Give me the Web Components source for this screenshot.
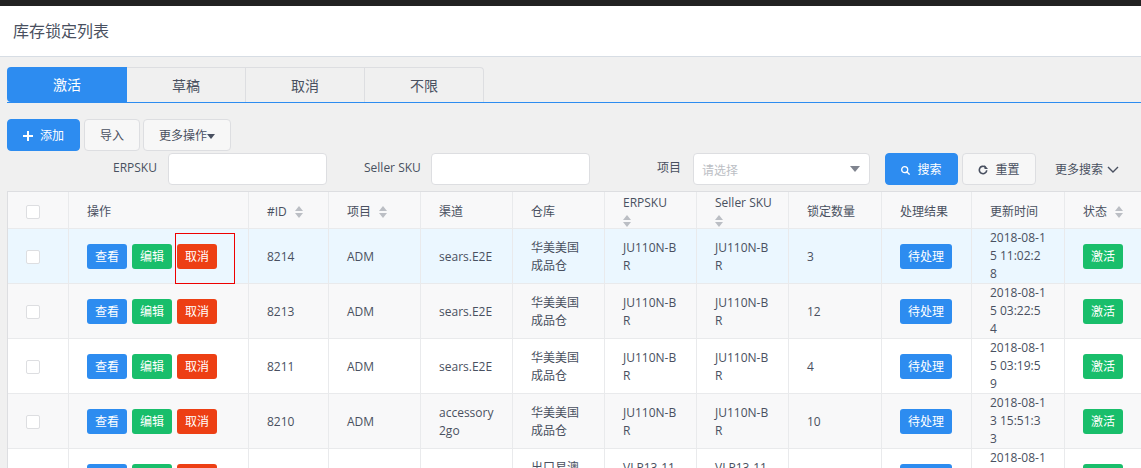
<!DOCTYPE html>
<html lang="zh"><head><meta charset="utf-8"><style>
html,body{margin:0;height:468px;overflow:hidden;background:#f0f0f0}
body{font:12px/18px "Open Sans","Noto Sans CJK SC",sans-serif;color:#495060}
</style></head><body>
<app-page></app-page>
<script>
const FONT='"Open Sans","Noto Sans CJK SC",sans-serif';
const C={blue:'#2d8cf0',green:'#19be6b',red:'#ed3f14'};
const sortIcon='<svg width="8" height="12" viewBox="0 0 8 12" style="flex:none"><path d="M4 0 8 5H0zM4 12 0 7h8z" fill="#bbbec4"/></svg>';

class AppHeader extends HTMLElement{constructor(){super();this.attachShadow({mode:'open'}).innerHTML=`<style>
:host{display:block;border-top:6px solid #222;background:#fff;border-bottom:1px solid #d7dde4;height:50px;box-sizing:content-box;padding-left:13px;font-size:16px;line-height:51px;color:#495060}
</style><slot></slot>`}}
customElements.define('app-header',AppHeader);

class TabBar extends HTMLElement{constructor(){super();this.attachShadow({mode:'open'}).innerHTML=`<style>
:host{display:flex;margin:10px 0 0 7px;height:36px;box-sizing:border-box;border-bottom:1px solid ${C.blue}}
</style><slot></slot>`}}
customElements.define('tab-bar',TabBar);

class TabItem extends HTMLElement{constructor(){super();this.attachShadow({mode:'open'}).innerHTML=`<style>
:host{display:block;width:119px;height:35px;box-sizing:border-box;border:1px solid #dddee1;border-left:0;border-bottom:0;text-align:center;font-size:14px;line-height:36px;color:#495060}
:host([first]){width:120px;border:0;background:${C.blue};color:#fff;border-radius:4px 0 0 4px}
:host([last]){border-radius:0 4px 0 0}
</style><slot></slot>`}}
customElements.define('tab-item',TabItem);

class UiButton extends HTMLElement{constructor(){super();this.attachShadow({mode:'open'}).innerHTML=`<style>
:host{display:inline-flex;align-items:center;justify-content:center;box-sizing:border-box;height:32px;padding-top:2px;border:1px solid #dddee1;border-radius:4px;background:#f7f7f7;color:#495060;font-size:12px;gap:7px;white-space:nowrap}
:host([primary]){background:${C.blue};border-color:${C.blue};color:#fff}
</style><slot name="icon"></slot><slot></slot>`}}
customElements.define('ui-button',UiButton);

class MiniTag extends HTMLElement{constructor(){super();this.attachShadow({mode:'open'}).innerHTML=`<style>
:host{display:inline-block;box-sizing:border-box;min-width:40px;height:25px;padding:0 8px;border-radius:3px;color:#fff;font-size:12px;line-height:25px;text-align:center;white-space:nowrap;background:${C.blue};vertical-align:middle}
:host([c=green]){background:${C.green}}
:host([c=red]){background:${C.red}}
</style><slot></slot>`}}
customElements.define('mini-tag',MiniTag);

class CheckBox extends HTMLElement{constructor(){super();this.attachShadow({mode:'open'}).innerHTML=`<style>
:host{display:block;width:12px;height:12px;border:1px solid #dddee1;border-radius:2px;background:#fff}
</style>`}}
customElements.define('check-box',CheckBox);

class TextInput extends HTMLElement{constructor(){super();this.attachShadow({mode:'open'}).innerHTML=`<style>
:host{display:flex;align-items:center;justify-content:space-between;box-sizing:border-box;height:32px;border:1px solid #dddee1;border-radius:4px;background:#fff;padding:0 9px 0 8px;color:#bbbec4;font-size:12px}
span{padding-top:3px}
svg{margin-top:-1px}
</style><span><slot></slot></span><slot name="caret"></slot>`}}
customElements.define('text-input',TextInput);

class SearchBar extends HTMLElement{constructor(){super();this.attachShadow({mode:'open'}).innerHTML=`<style>
:host{display:block;margin:16px 0 0 7px}
.acts{display:flex;gap:4px;height:32px}
.filter{display:flex;align-items:center;height:32px;margin-top:2px;padding-left:106px}
.filter>span{white-space:nowrap}
.lb{padding-bottom:2px}
</style>
<div class="acts">
<ui-button primary style="width:73px"><svg slot="icon" width="10" height="10" viewBox="0 0 10 10"><path d="M5 0v10M0 5h10" stroke="#fff" stroke-width="2"/></svg>添加</ui-button>
<ui-button style="width:56px">导入</ui-button>
<ui-button style="width:88px;gap:0;margin-left:-1px">更多操作<svg width="8" height="5" viewBox="0 0 8 5"><path d="M0 0h8L4 5z" fill="#495060"/></svg></ui-button>
</div>
<div class="filter">
<span class="lb" style="width:43px">ERPSKU</span>
<text-input style="width:159px;margin-left:12px"></text-input>
<span class="lb" style="width:55px;margin-left:37px">Seller SKU</span>
<text-input style="width:159px;margin-left:12px"></text-input>
<span class="lb" style="width:24px;margin-left:67px">项目</span>
<text-input style="width:177px;margin-left:12px">请选择<svg slot="caret" width="10" height="6" viewBox="0 0 10 6"><path d="M0 0h10L5 6z" fill="#80848f"/></svg></text-input>
<ui-button primary style="width:73px;margin-left:15px"><svg slot="icon" width="9" height="9" viewBox="0 0 9 9" fill="none" stroke="#fff" stroke-width="1.3"><circle cx="3.7" cy="3.7" r="3"/><path d="M6 6l2.6 2.6"/></svg>搜索</ui-button>
<ui-button style="width:74px;margin-left:4px"><svg slot="icon" width="10" height="10" viewBox="0 0 10 10" fill="none" stroke="#495060" stroke-width="1.6"><path d="M8.7 5.2A3.7 3.7 0 1 1 7.2 2"/><path d="M6.5 0v4h3.5z" stroke="none" fill="#495060"/></svg>重置</ui-button>
<span style="margin-left:19px;display:flex;align-items:center;gap:4px;padding-top:1px">更多搜索<svg width="12" height="7" viewBox="0 0 12 7" fill="none" stroke="#495060" stroke-width="1.4"><path d="M1 1l5 5 5-5"/></svg></span>
</div>`}}
customElements.define('search-bar',SearchBar);

const COLS=[61,180,80,92,92,92,92,92,93,90,93,80];
const ROWS=[
['8214','ADM','sears.E2E','华美美国<br>成品仓','JU110N-B<br>R','3','2018-08-1<br>5 11:02:2<br>8'],
['8213','ADM','sears.E2E','华美美国<br>成品仓','JU110N-B<br>R','12','2018-08-1<br>5 03:22:5<br>4'],
['8211','ADM','sears.E2E','华美美国<br>成品仓','JU110N-B<br>R','4','2018-08-1<br>5 03:19:5<br>9'],
['8210','ADM','accessory<br>2go','华美美国<br>成品仓','JU110N-B<br>R','10','2018-08-1<br>3 15:51:3<br>3'],
['8209','ADM','sears.E2E','出口易澳<br>洲仓','VLP13-11<br>5','2','2018-08-1<br>3 15:51:3<br>3'],
];
class DataTable extends HTMLElement{constructor(){super();
const th=t=>`<th class="one">${t}</th>`;
const head=`<tr>
<th class="c one"><check-box></check-box></th>${th('操作')}
<th class="one"><span class="in">#ID ${sortIcon}</span></th><th class="one"><span class="in">项目 ${sortIcon}</span></th>
${th('渠道')}${th('仓库')}
<th><div class="st">ERPSKU${sortIcon}</div></th><th><div class="st">Seller SKU${sortIcon}</div></th>
${th('锁定数量')}<th class="one mid">处理结果</th>${th('更新时间')}<th class="one"><span class="in">状态 ${sortIcon}</span></th></tr>`;
const body=ROWS.map((r,i)=>`<tr class="${i==0?'hover':i%2?'odd':''}">
<td class="c t"><check-box></check-box></td>
<td><div class="ops"><mini-tag>查看</mini-tag><mini-tag c="green">编辑</mini-tag><mini-tag c="red">取消</mini-tag>${i==0?'<span class="focus"></span>':''}</div></td>
<td class="t">${r[0]}</td><td class="t">${r[1]}</td><td class="t">${r[2]}</td><td class="t">${r[3]}</td><td class="t">${r[4]}</td><td class="t">${r[4]}</td><td class="t">${r[5]}</td>
<td class="mid"><mini-tag>待处理</mini-tag></td><td>${r[6]}</td><td class="mid"><mini-tag c="green">激活</mini-tag></td></tr>`).join('');
this.attachShadow({mode:'open'}).innerHTML=`<style>
:host{display:block;margin:6px 0 0 7px;width:1160px;border-top:1px solid #dddee1;border-left:1px solid #dddee1}
table{border-collapse:separate;border-spacing:0;table-layout:fixed;width:1137px;background:#fff}
th,td{box-sizing:border-box;padding:0 18px;border-right:1px solid #e9eaec;border-bottom:1px solid #e9eaec;text-align:left;font-weight:400;word-break:break-all}
th{height:37px;background:#f8f8f9;line-height:18px}
th.one{padding-top:4px}
td{height:55px;line-height:18px}
td.t{padding-top:2px}
.c{padding-left:0;padding-right:0}
check-box{margin:0 auto 0 18px}
.mid{padding-left:18px;padding-right:0}
tr.hover td{background:#ebf7ff}
tr.odd td{background:#f8f8f9}
.in{display:inline-flex;align-items:center;gap:8px}
.st{line-height:18px;white-space:nowrap}
.st svg{display:block;margin-top:3px}
.ops{display:flex;gap:5px;position:relative}
.focus{position:absolute;left:88px;top:-11px;width:58px;height:49px;border:1px solid #e00}
</style>
<table><colgroup>${COLS.map(w=>`<col style="width:${w}px">`).join('')}</colgroup><thead>${head}</thead><tbody>${body}</tbody></table>`}}
customElements.define('data-table',DataTable);

class AppPage extends HTMLElement{constructor(){super();this.attachShadow({mode:'open'}).innerHTML=`<style>
:host{display:block;height:468px;overflow:hidden;font-family:${FONT}}
</style>
<app-header>库存锁定列表</app-header>
<tab-bar><tab-item first>激活</tab-item><tab-item>草稿</tab-item><tab-item>取消</tab-item><tab-item last>不限</tab-item></tab-bar>
<search-bar></search-bar>
<data-table></data-table>`}}
customElements.define('app-page',AppPage);
</script></body></html>
